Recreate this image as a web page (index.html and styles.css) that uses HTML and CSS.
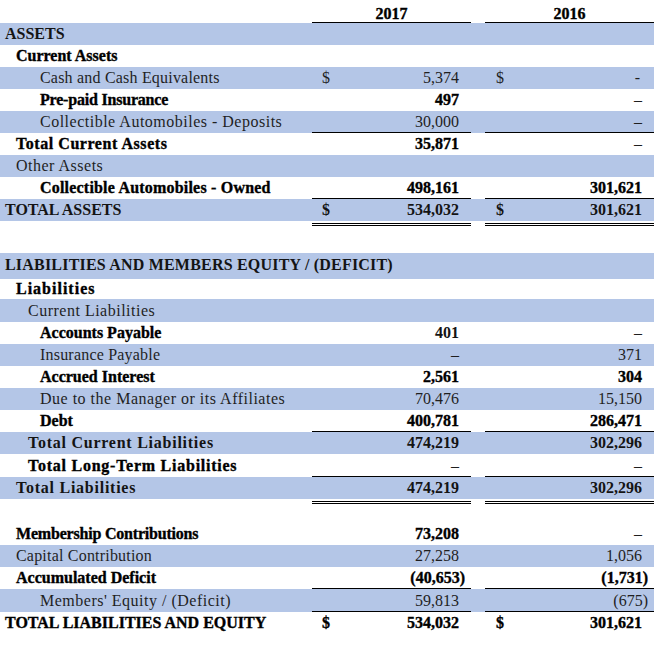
FILE: index.html
```html
<!DOCTYPE html>
<html>
<head>
<meta charset="utf-8">
<link rel="stylesheet" href="styles.css">
</head>
<body>
<div class="sheet">
  <div class="row head">
    <div class="lbl"></div>
    <div class="v c17 ul hy">2017</div>
    <div></div>
    <div class="v c16 ul hy">2016</div>
  </div>

  <div class="row blue">
    <div class="lbl i0 b">ASSETS</div><div class="v c17"></div><div></div><div class="v c16"></div>
  </div>
  <div class="row">
    <div class="lbl i1 hv">Current Assets</div><div class="v c17"></div><div></div><div class="v c16"></div>
  </div>
  <div class="row blue">
    <div class="lbl i3 r ls-s">Cash and Cash Equivalents</div>
    <div class="v c17 r"><span>$</span><span>5,374</span></div><div></div>
    <div class="v c16 r"><span>$</span><span class="hyph">-</span></div>
  </div>
  <div class="row">
    <div class="lbl i3 hv ls-n">Pre-paid Insurance</div>
    <div class="v c17 hv"><span></span><span>497</span></div><div></div>
    <div class="v c16 r"><span></span><span>–</span></div>
  </div>
  <div class="row blue">
    <div class="lbl i3 r">Collectible Automobiles - Deposits</div>
    <div class="v c17 r ul"><span></span><span>30,000</span></div><div></div>
    <div class="v c16 r ul"><span></span><span>–</span></div>
  </div>
  <div class="row">
    <div class="lbl i1 hv ls-m">Total Current Assets</div>
    <div class="v c17 hv"><span></span><span>35,871</span></div><div></div>
    <div class="v c16 r"><span></span><span>–</span></div>
  </div>
  <div class="row blue">
    <div class="lbl i1 r">Other Assets</div><div class="v c17"></div><div></div><div class="v c16"></div>
  </div>
  <div class="row">
    <div class="lbl i3 hv ls-s">Collectible Automobiles - Owned</div>
    <div class="v c17 hv ul"><span></span><span>498,161</span></div><div></div>
    <div class="v c16 hv ul"><span></span><span>301,621</span></div>
  </div>
  <div class="row blue">
    <div class="lbl i0 b">TOTAL ASSETS</div>
    <div class="v c17 b dbl"><span>$</span><span>534,032</span></div><div></div>
    <div class="v c16 b dbl"><span>$</span><span>301,621</span></div>
  </div>

  <div class="row gap1"></div>

  <div class="row blue tall">
    <div class="lbl i0 b ls-s">LIABILITIES AND MEMBERS EQUITY / (DEFICIT)</div><div class="v c17"></div><div></div><div class="v c16"></div>
  </div>
  <div class="row short">
    <div class="lbl i1 hv ls-xl">Liabilities</div><div class="v c17"></div><div></div><div class="v c16"></div>
  </div>
  <div class="row blue r23">
    <div class="lbl i2 r">Current Liabilities</div><div class="v c17"></div><div></div><div class="v c16"></div>
  </div>
  <div class="row">
    <div class="lbl i3 hv">Accounts Payable</div>
    <div class="v c17 b"><span></span><span>401</span></div><div></div>
    <div class="v c16 r"><span></span><span>–</span></div>
  </div>
  <div class="row blue">
    <div class="lbl i3 r ls-s">Insurance Payable</div>
    <div class="v c17 r"><span></span><span>–</span></div><div></div>
    <div class="v c16 r"><span></span><span>371</span></div>
  </div>
  <div class="row">
    <div class="lbl i3 hv">Accrued Interest</div>
    <div class="v c17 hv"><span></span><span>2,561</span></div><div></div>
    <div class="v c16 hv"><span></span><span>304</span></div>
  </div>
  <div class="row blue">
    <div class="lbl i3 r">Due to the Manager or its Affiliates</div>
    <div class="v c17 r"><span></span><span>70,476</span></div><div></div>
    <div class="v c16 r"><span></span><span>15,150</span></div>
  </div>
  <div class="row">
    <div class="lbl i3 hv">Debt</div>
    <div class="v c17 hv ul"><span></span><span>400,781</span></div><div></div>
    <div class="v c16 hv ul"><span></span><span>286,471</span></div>
  </div>
  <div class="row blue">
    <div class="lbl i2 b ls-l">Total Current Liabilities</div>
    <div class="v c17 b"><span></span><span>474,219</span></div><div></div>
    <div class="v c16 b"><span></span><span>302,296</span></div>
  </div>
  <div class="row r23">
    <div class="lbl i2 hv ls-l">Total Long-Term Liabilities</div>
    <div class="v c17 r ul"><span></span><span>–</span></div><div></div>
    <div class="v c16 r ul"><span></span><span>–</span></div>
  </div>
  <div class="row blue">
    <div class="lbl i1 b ls-l">Total Liabilities</div>
    <div class="v c17 b dbl"><span></span><span>474,219</span></div><div></div>
    <div class="v c16 b dbl"><span></span><span>302,296</span></div>
  </div>

  <div class="row gap2"></div>

  <div class="row">
    <div class="lbl i1 hv ls-n">Membership Contributions</div>
    <div class="v c17 hv"><span></span><span>73,208</span></div><div></div>
    <div class="v c16 r"><span></span><span>–</span></div>
  </div>
  <div class="row blue">
    <div class="lbl i1 r ls-s">Capital Contribution</div>
    <div class="v c17 r"><span></span><span>27,258</span></div><div></div>
    <div class="v c16 r"><span></span><span>1,056</span></div>
  </div>
  <div class="row">
    <div class="lbl i1 hv">Accumulated Deficit</div>
    <div class="v c17 hv ul"><span></span><span class="neg">(40,653)</span></div><div></div>
    <div class="v c16 hv ul"><span></span><span class="neg">(1,731)</span></div>
  </div>
  <div class="row blue r23">
    <div class="lbl i3 r">Members' Equity / (Deficit)</div>
    <div class="v c17 r ul"><span></span><span>59,813</span></div><div></div>
    <div class="v c16 r ul"><span></span><span class="neg">(675)</span></div>
  </div>
  <div class="row">
    <div class="lbl i0 hv">TOTAL LIABILITIES AND EQUITY</div>
    <div class="v c17 hv dbl"><span>$</span><span>534,032</span></div><div></div>
    <div class="v c16 hv dbl"><span>$</span><span>301,621</span></div>
  </div>
</div>
</body>
</html>
```
FILE: styles.css
```css
html, body {
  margin: 0;
  padding: 0;
  background: #fff;
  overflow: hidden;
}

.sheet {
  width: 654px;
  font-family: "Liberation Serif", "Times New Roman", serif;
  font-size: 16px;
  color: #1f1f1f;
}

.row {
  display: grid;
  grid-template-columns: 312px 159px 14px 169px;
  height: 22px;
  line-height: 22px;
  white-space: nowrap;
}

.row.head {
  height: 23px;
  line-height: 18px;
  padding-top: 5px;
  box-sizing: border-box;
}

.row.head .v {
  justify-content: center;
  padding: 0;
}

.row.r23 { height: 23px; line-height: 23px; }
.row.tall { height: 26px; line-height: 24px; }
.row.short { height: 20px; line-height: 20px; }
.row.gap1 { height: 32px; }
.row.gap2 { height: 24px; }

.blue {
  background: #b4c6e7;
}

.lbl.i0 { padding-left: 5px; }
.lbl.i1 { padding-left: 16px; }
.lbl.i2 { padding-left: 28px; }
.lbl.i3 { padding-left: 40px; }

.v {
  display: flex;
  justify-content: space-between;
}

.v.c17 {
  padding: 0 12px 0 10px;
}

.v.c16 {
  padding: 0 12px 0 11px;
}

.r {
  font-weight: 400;
  color: #1f1f1f;
}

.lbl.r {
  letter-spacing: 0.5px;
}

.b {
  font-weight: 700;
  color: #141414;
}

.hv, .hy {
  font-weight: 700;
  color: #000;
  -webkit-text-stroke: 0.35px #000;
}

.lbl.ls-n { letter-spacing: -0.2px; }
.lbl.ls-s { letter-spacing: 0.2px; }
.lbl.ls-m { letter-spacing: 0.55px; }
.lbl.ls-l { letter-spacing: 0.75px; }
.lbl.ls-xl { letter-spacing: 1px; }

.neg {
  margin-right: -6px;
}

.hyph {
  margin-right: 2px;
}

.ul {
  box-shadow: inset 0 -1px 0 #000;
}

.dbl {
  box-shadow: 0 2px 0 #fff, 0 3px 0 #000, 0 4px 0 #fff, 0 5px 0 #000;
}
```
